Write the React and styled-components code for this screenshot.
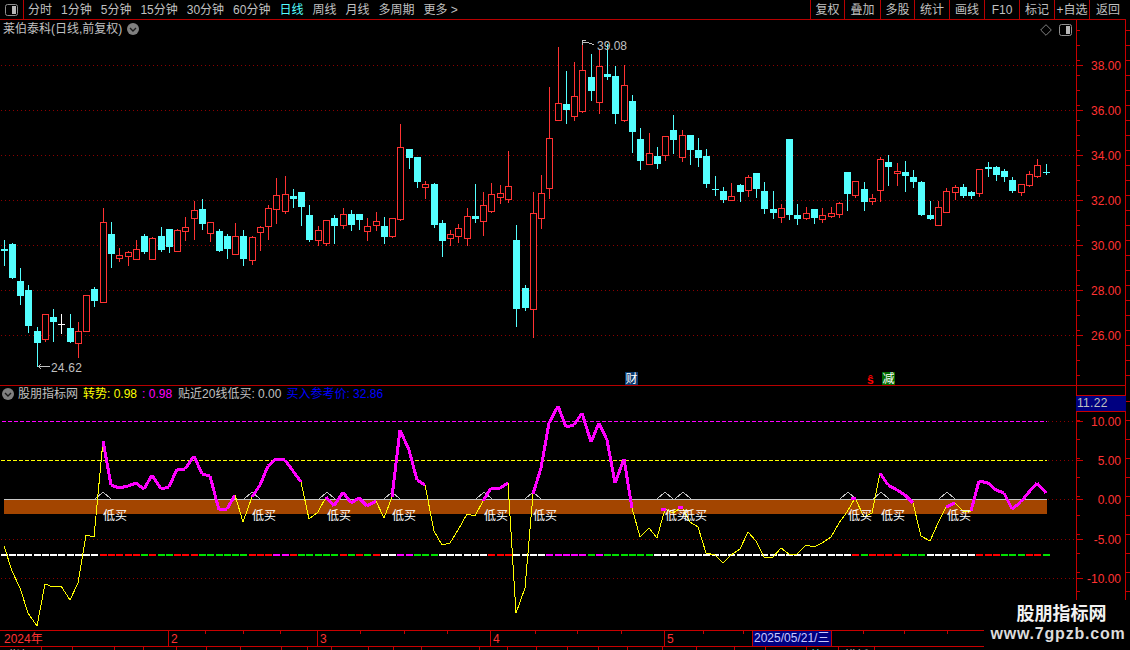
import React from 'react';
import styled, { createGlobalStyle } from 'styled-components';

const RED = '#ff3232';
const CYAN = '#54ffff';
const RULE = '#b80000';
const AXIS = '#c80000';
const GRID = '#8c0000';
const GRAY = '#c0c0c0';
const FONT = '"Liberation Sans", "Noto Sans CJK SC", sans-serif';

const Global = createGlobalStyle`
  html, body { margin: 0; padding: 0; background: #000; }
  #root { width: 1130px; height: 650px; overflow: hidden; }
  svg text { font-family: ${FONT}; font-size: 12px; }
`;

const Stage = styled.div`
  position: relative; width: 1130px; height: 650px; overflow: hidden;
  background: #000; color: ${GRAY}; font: 12px/14px ${FONT};
  display: flex; flex-direction: column;
`;
const Toolbar = styled.header`
  display: flex; align-items: stretch; height: 20px; width: 1126px; flex: none;
  box-sizing: border-box; border-bottom: 1px solid ${RULE};
`;
const LayoutButton = styled.div`
  width: 24px; box-sizing: border-box; border-right: 1px solid ${RULE};
  display: flex; align-items: center; justify-content: center; padding-right: 1px;
`;
const Periods = styled.nav`
  display: flex; align-items: center; gap: 9px; padding-left: 4px; flex: 1;
`;
const Period = styled.span`
  color: ${p => (p.$active ? CYAN : GRAY)};
  white-space: nowrap;
`;
const Tool = styled.span`
  width: ${p => p.$w}px; box-sizing: border-box; border-left: 1px solid ${RULE};
  display: flex; align-items: center; justify-content: center; white-space: nowrap;
`;
const Pane = styled.section`
  display: flex; flex: none; width: 1126px; height: ${p => p.$h}px;
  box-sizing: border-box; border-bottom: ${p => (p.$ruled ? `1px solid ${RULE}` : '0')};
`;
const Chart = styled.div`
  position: relative; width: 1076px; flex: none; height: 100%;
`;
const Plot = styled.svg`
  display: block; width: 100%; height: 100%;
`;
const ScaleWrap = styled.div`
  position: relative; height: 100%; flex: none;
`;
const Scale = styled.div`
  width: 50px; flex: none; height: 100%; box-sizing: border-box;
  border-left: 1px solid ${AXIS}; border-right: 1px solid ${AXIS};
`;
const ScaleSvg = styled.svg`
  display: block; width: 100%; height: 100%; overflow: visible;
`;
const ValueFlag = styled.div`
  position: absolute; right: 0; top: 9px; width: 100%; height: 17px; box-sizing: border-box;
  background: #000080; color: ${GRAY}; border-top: 1px solid ${AXIS}; border-bottom: 1px solid ${AXIS};
  line-height: 15px; padding-left: 1px; letter-spacing: 0.3px;
`;
const Title = styled.div`
  position: absolute; left: 3px; top: 2px; display: flex; align-items: center; gap: 5px; white-space: nowrap;
`;
const PaneTools = styled.div`
  position: absolute; right: 4px; top: 4px; display: flex; align-items: center; gap: 7px;
`;
const Legend = styled.div`
  position: absolute; left: 2px; top: 1px; display: flex; align-items: center; white-space: nowrap; height: 14px;
`;
const LegendItem = styled.span`
  color: ${p => p.$c}; margin-left: ${p => p.$gap}px;
`;
const TimeAxis = styled.div`
  display: flex; flex: none; height: 17px; position: relative; box-sizing: border-box;
  border-top: 1px solid ${AXIS}; border-bottom: 1px solid ${AXIS}; width: 100%;
`;
const TimeCell = styled.div`
  width: ${p => p.$w}px; box-sizing: border-box; color: ${RED}; padding-left: ${p => (p.$first ? 4 : 2)}px;
  border-right: 1px solid ${AXIS}; line-height: 16px;
`;
const TimeCursor = styled.div`
  width: 79px; box-sizing: border-box; background: #000080; color: #c8c8ff;
  border-right: 1px solid ${AXIS}; padding-left: 1px; line-height: 15px; white-space: nowrap;
`;
const TimeTicks = styled.svg`
  position: absolute; left: 0; top: 0; width: 1130px; height: 4px; pointer-events: none;
`;
const Tabs = styled.div`
  display: flex; flex: none; height: 20px; width: 100%;
`;
const Tab = styled.div`
  width: ${p => p.$w}px; box-sizing: border-box; border-right: 1px solid ${AXIS};
  padding-top: 2px; text-align: center; white-space: nowrap; overflow: hidden;
  color: ${p => (p.$active ? CYAN : GRAY)};
`;
const Watermark = styled.aside`
  position: absolute; right: 0; bottom: 0; width: 146px; height: 50px; background: #000;
  display: flex; flex-direction: column; align-items: center;
`;
const WatermarkName = styled.div`
  margin-top: 3px; padding-left: 9px; color: #f2f2f2; font-size: 18px; line-height: 22px; font-weight: 700;
`;
const WatermarkUrl = styled.div`
  margin-top: 0; padding-left: 2px; color: #dcdcdc; font-size: 16px; line-height: 18px; font-weight: 700; letter-spacing: 0.8px;
  font-family: "Liberation Sans", sans-serif; white-space: nowrap;
`;
const BadgeSvg = styled.svg`
  flex: none;
`;

/* ---------- data ---------- */
const X = i => Math.floor(4 + 8.27 * i);

const candles = `c240,249,251,265 c243,244,278,278 c268,281,296,304 c285,290,326,332 c327,331,343,366 r314,314,339,341 c309,317,322,341 w314,324,325,333 c314,328,342,342 r322,331,343,357 r295,295,331,331 c287,289,301,306 r208,222,302,302 c222,234,254,267 r248,255,258,261 r251,252,256,265 r240,249,259,259 c234,236,252,253 r237,238,259,259 c227,236,250,251 c229,229,247,252 r229,230,251,251 r217,227,231,240 r201,210,218,239 c199,209,224,229 r222,222,233,241 c229,231,251,251 c234,236,249,258 r223,236,254,254 c230,236,259,265 r236,237,260,264 r226,227,232,250 r205,208,226,239 r178,195,209,223 r176,194,211,213 c189,196,199,207 c192,192,207,225 c205,215,240,241 r226,230,240,245 r220,220,243,245 c215,218,226,243 r208,214,225,228 c210,214,225,230 c214,214,220,229 r218,226,231,240 r212,221,225,230 c217,226,237,243 r218,218,236,237 r124,147,219,220 c149,149,158,168 c157,157,182,187 r181,184,187,198 c183,184,225,227 c220,223,241,256 r230,234,238,245 r224,228,236,242 r208,216,238,245 c184,216,219,222 r192,205,221,235 r183,194,211,212 r185,193,197,203 r151,186,199,202 c225,240,309,326 c285,288,308,310 r192,213,309,337 r175,193,218,228 r87,138,188,198 r47,103,120,120 c71,104,110,123 r62,96,116,120 r42,70,111,112 c54,77,91,100 r50,66,102,113 c44,74,77,79 c66,76,114,123 r65,85,120,121 c95,101,132,152 c128,139,161,169 r133,153,164,164 c147,156,164,168 r136,136,155,160 c115,130,140,153 r130,135,157,161 c135,135,150,164 c138,150,158,166 c149,156,184,187 c176,189,190,195 c187,191,200,202 r183,196,200,200 c184,185,192,201 r175,177,190,196 c173,173,189,197 c182,191,209,213 c191,209,213,218 r204,208,217,222 c139,139,215,219 c204,215,219,224 r207,213,218,219 c209,209,218,223 r208,215,219,222 r207,213,216,217 r202,203,214,217 c172,172,194,210 r181,181,195,197 c182,189,202,210 r194,198,201,204 r157,159,190,201 c155,162,167,185 r163,171,173,185 c161,172,176,191 c170,177,182,187 c181,182,215,215 c201,215,219,219 r201,207,225,225 r188,191,212,212 r185,187,192,199 c184,187,196,197 c191,192,196,198 r169,169,193,196 c162,167,169,176 c166,167,175,180 c169,171,177,181 c177,180,191,192 r184,184,192,195 r171,174,185,186 r159,165,176,177 c164,172,173,174`
  .split(' ')
  .map(s => {
    const [wt, bt, bb, wb] = s.slice(1).split(',').map(Number);
    return { t: s[0], wt, bt, bb, wb };
  });

const lineY = [546,571,588,613,626,584,587,586,600,583,535,537,441,485,488,486,483,489,475,489,487,469,469,456,474,476,510,509,495,522,497,485,466,459,460,471,482,519,512,497,506,492,503,498,506,501,518,497,430,450,480,485,531,545,543,530,514,516,501,488,488,483,613,588,494,468,423,406,427,425,413,442,423,440,483,459,508,537,528,538,509,513,507,522,527,553,555,563,555,549,532,541,557,557,548,554,554,545,547,543,537,523,512,498,517,513,473,485,490,495,503,536,541,523,507,503,511,511,481,483,490,493,509,502,492,483,493];

const hotRanges = [[12,28],[30,36],[39,45],[47,51],[58,61],[64,76],[106,110],[114,115],[117,126]];
const hotDots = [80,82,103];

const dashSpec = [[12,'w'],[5,'r'],[1,'g'],[1,'r'],[2,'g'],[3,'r'],[6,'g'],[3,'r'],[2,'m'],[1,'r'],[5,'g'],[1,'r'],[1,'g'],[1,'r'],[1,'g'],[1,'r'],[2,'w'],[2,'m'],[3,'g'],[6,'w'],[3,'r'],[4,'w'],[5,'m'],[1,'g'],[1,'m'],[6,'g'],[24,'w'],[1,'r'],[1,'g'],[4,'r'],[3,'g'],[6,'w'],[3,'r'],[3,'g'],[2,'r'],[1,'g']];
const dashColors = { w: '#ffffff', r: '#ff0000', g: '#00e000', m: '#ff00ff' };
const dashes = dashSpec.flatMap(([n, c]) => Array(n).fill(dashColors[c]));

const lowBuyX = [103, 252, 327, 392, 484, 533, 665, 683, 848, 881, 947];

const priceLevels = [[65,'38.00'],[110,'36.00'],[155,'34.00'],[200,'32.00'],[245,'30.00'],[290,'28.00'],[335,'26.00']];
const indicatorLevels = [[421,'10.00'],[460,'5.00'],[499,'0.00'],[539,'-5.00'],[578,'-10.00']];

const tabEdges = [42,73,115,144,177,207,241,282,308,332,369,394,422,480,508,537,568,599,628,663,697,735,766,807,839,875];
const tabNames = ['指标','MACD','DMA','DMI','TRIX','FSL','EMV','WVAD','RSI','VR','ARBR','CR','PSY','KDJ','WR','BIAS','CCI','MTM','ROC','BOLL','SAR','OBV','SKDJ','UOS','筹码','模板'];
const timeTicks = [205,243,280,360,404,447,535,577,621,703,743,863,904,947];

/* ---------- drawings ---------- */
const PanelGlyph = () => (
  <svg width="13" height="12" viewBox="0 0 13 12">
    <rect x="0.5" y="0.5" width="12" height="11" rx="2" fill="#000" stroke="#909090" />
    <rect x="7" y="2" width="4" height="8" fill="#b8b8b8" />
  </svg>
);
const Diamond = () => (
  <svg width="12" height="12" viewBox="0 0 12 12">
    <path d="M6 .7 11.3 6 6 11.3 .7 6Z" fill="none" stroke="#808080" />
  </svg>
);
const DownBadge = () => (
  <BadgeSvg width="12" height="12" viewBox="0 0 12 12">
    <circle cx="6" cy="6" r="6" fill="#808080" />
    <path d="M3 5 6 8 9 5" fill="none" stroke="#1a1a1a" strokeWidth="1.4" />
  </BadgeSvg>
);

const Candle = ({ c, x }) => {
  const col = c.t === 'r' ? RED : c.t === 'c' ? CYAN : '#ffffff';
  return (
    <g>
      <rect x={x} y={c.wt} width="1" height={c.wb - c.wt + 1} fill={col} />
      {c.t === 'r' ? (
        <rect x={x - 2.5} y={c.bt + 0.5} width="6" height={c.bb - c.bt} fill="#000" stroke={col} />
      ) : (
        <rect x={x - 3} y={c.bt} width="7" height={Math.max(c.bb - c.bt, 1)} fill={col} />
      )}
    </g>
  );
};

const MainPlot = () => (
  <Plot viewBox="0 20 1076 365" shapeRendering="crispEdges">
    {priceLevels.map(([y]) => (
      <line key={y} x1="1" x2="1076" y1={y + 0.5} y2={y + 0.5} stroke={GRID} strokeDasharray="1 3" />
    ))}
    {candles.map((c, i) => <Candle key={i} c={c} x={X(i)} />)}
    <path d="M38 366.5H50M38 366.5l3-2M38 366.5l3 2" fill="none" stroke={GRAY} />
    <text x="51" y="372" fill={GRAY} letterSpacing="0.2">24.62</text>
    <path d="M582 40.5h4M582 40.5v4M583 42.5h4l7 2" fill="none" stroke={GRAY} />
    <text x="597" y="50" fill={GRAY}>39.08</text>
    <rect x="625" y="372" width="13" height="13" fill="#0a3a6e" />
    <text x="625.5" y="383" fill="#ffffff">财</text>
    <text x="867" y="384" fill="#ff0000" fontWeight="700">ŝ</text>
    <rect x="882" y="372" width="13" height="13" fill="#006a00" />
    <text x="882.5" y="383" fill="#ffffff">减</text>
  </Plot>
);

const isHot = i => hotRanges.some(([a, b]) => i >= a && i <= b);

const IndicatorPlot = () => {
  const pts = lineY.map((y, i) => [X(i), y]);
  const seg = (a, b) => `${pts[a][0]},${pts[a][1]} ${pts[b][0]},${pts[b][1]}`;
  return (
    <Plot viewBox="0 386 1076 244" shapeRendering="crispEdges">
      <line x1="2" x2="1047" y1="421.5" y2="421.5" stroke="#ff00ff" strokeDasharray="4 2" />
      <line x1="1048" x2="1076" y1="421.5" y2="421.5" stroke={GRID} strokeDasharray="1 3" />
      <line x1="1" x2="1047" y1="460.5" y2="460.5" stroke="#ffff00" strokeDasharray="4 2" />
      <line x1="1048" x2="1076" y1="460.5" y2="460.5" stroke={GRID} strokeDasharray="1 3" />
      <line x1="1048" x2="1076" y1="499.5" y2="499.5" stroke={GRID} strokeDasharray="1 3" />
      <line x1="1" x2="1076" y1="539.5" y2="539.5" stroke={GRID} strokeDasharray="1 3" />
      <line x1="1" x2="1076" y1="578.5" y2="578.5" stroke={GRID} strokeDasharray="1 3" />
      <rect x="4" y="500" width="1043" height="14" fill="#a34500" />
      <line x1="4" x2="1047" y1="499.5" y2="499.5" stroke="#c8c8c8" />
      {lowBuyX.map(x => (
        <path key={x} d={`M${x - 8} 499 L${x} 492 L${x + 8} 499`} fill="none" stroke={GRAY} />
      ))}
      {dashes.map((c, i) => (
        <rect key={i} x={X(i) - 3} y="554" width="7" height="2" fill={c} />
      ))}
      {pts.slice(0, -1).map((_, i) => {
        const hot = isHot(i) && isHot(i + 1);
        return (
          <polyline key={i} points={seg(i, i + 1)} fill="none"
            stroke={hot ? '#ff00ff' : '#ffff00'} strokeWidth={hot ? 3 : 1} />
        );
      })}
      {hotDots.map(i => (
        <line key={i} x1={X(i) - 4} x2={X(i) + 1} y1={lineY[i]} y2={lineY[i] + 1} stroke="#ff00ff" strokeWidth="3" />
      ))}
      {lowBuyX.map(x => (
        <text key={x} x={x} y="520" fill="#ffffff">低买</text>
      ))}
    </Plot>
  );
};

const Ticks = ({ levels, minor, top, h }) => (
  <ScaleSvg viewBox={`1077 ${top} 48 ${h}`} preserveAspectRatio="xMinYMin" shapeRendering="crispEdges">
    {minor.map(y => <line key={y} x1="1077" x2="1080" y1={y + 0.5} y2={y + 0.5} stroke={AXIS} />)}
    {minor.map(y => <line key={`r${y}`} x1="1126" x2="1130" y1={y + 0.5} y2={y + 0.5} stroke={AXIS} />)}
    {levels.map(([y, t]) => (
      <g key={y}>
        <line x1="1077" x2="1083" y1={y + 0.5} y2={y + 0.5} stroke={AXIS} />
        <text x="1121" y={y + 5} textAnchor="end" fill={RED} shapeRendering="auto">{t}</text>
      </g>
    ))}
  </ScaleSvg>
);

const range = (a, b, s) => {
  const out = [];
  for (let y = a; y < b; y += s) out.push(Math.round(y));
  return out;
};

export default function App() {
  return (
    <Stage>
      <Global />
      <Toolbar>
        <LayoutButton><PanelGlyph /></LayoutButton>
        <Periods>
          {['分时','1分钟','5分钟','15分钟','30分钟','60分钟'].map(t => <Period key={t}>{t}</Period>)}
          <Period $active>日线</Period>
          {['周线','月线','多周期','更多 >'].map(t => <Period key={t}>{t}</Period>)}
        </Periods>
        {[['复权',34],['叠加',36],['多股',34],['统计',35],['画线',35],['F10',35],['标记',35],['+自选',35],['返回',37]].map(([t, w]) => (
          <Tool key={t} $w={w}>{t}</Tool>
        ))}
      </Toolbar>

      <Pane $h={366} $ruled>
        <Chart>
          <MainPlot />
          <Title>莱伯泰科(日线,前复权)<DownBadge /></Title>
          <PaneTools><Diamond /><PanelGlyph /></PaneTools>
        </Chart>
        <ScaleWrap>
          <Scale>
            <Ticks top={20} h={365} levels={priceLevels} minor={range(30, 385, 15)} />
          </Scale>
        </ScaleWrap>
      </Pane>

      <Pane $h={244}>
        <Chart>
          <IndicatorPlot />
          <Legend>
            <DownBadge />
            <LegendItem $c={GRAY} $gap={4}>股朋指标网</LegendItem>
            <LegendItem $c="#ffff00" $gap={5}>转势: 0.98</LegendItem>
            <LegendItem $c="#ff00ff" $gap={5}>: 0.98</LegendItem>
            <LegendItem $c={GRAY} $gap={6}>贴近20线低买: 0.00</LegendItem>
            <LegendItem $c="#0000ff" $gap={5}>买入参考价: 32.86</LegendItem>
          </Legend>
        </Chart>
        <ScaleWrap>
          <Scale>
            <Ticks top={386} h={244} levels={indicatorLevels} minor={range(401, 630, 19)} />
          </Scale>
          <ValueFlag>11.22</ValueFlag>
        </ScaleWrap>
      </Pane>

      <TimeAxis>
        <TimeCell $w={169} $first>2024年</TimeCell>
        <TimeCell $w={149}>2</TimeCell>
        <TimeCell $w={173}>3</TimeCell>
        <TimeCell $w={174}>4</TimeCell>
        <TimeCell $w={88}>5</TimeCell>
        <TimeCursor>2025/05/21/三</TimeCursor>
        <TimeTicks viewBox="0 0 1130 4" shapeRendering="crispEdges">
          {timeTicks.map(x => <line key={x} x1={x + 0.5} x2={x + 0.5} y1="0" y2="3" stroke={AXIS} />)}
        </TimeTicks>
      </TimeAxis>

      <Tabs>
        {tabEdges.map((e, i) => (
          <Tab key={e} $w={e - (i ? tabEdges[i - 1] : 0)} $active={i === 24}>{tabNames[i]}</Tab>
        ))}
      </Tabs>

      <Watermark>
        <WatermarkName>股朋指标网</WatermarkName>
        <WatermarkUrl>www.7gpzb.com</WatermarkUrl>
      </Watermark>
    </Stage>
  );
}
